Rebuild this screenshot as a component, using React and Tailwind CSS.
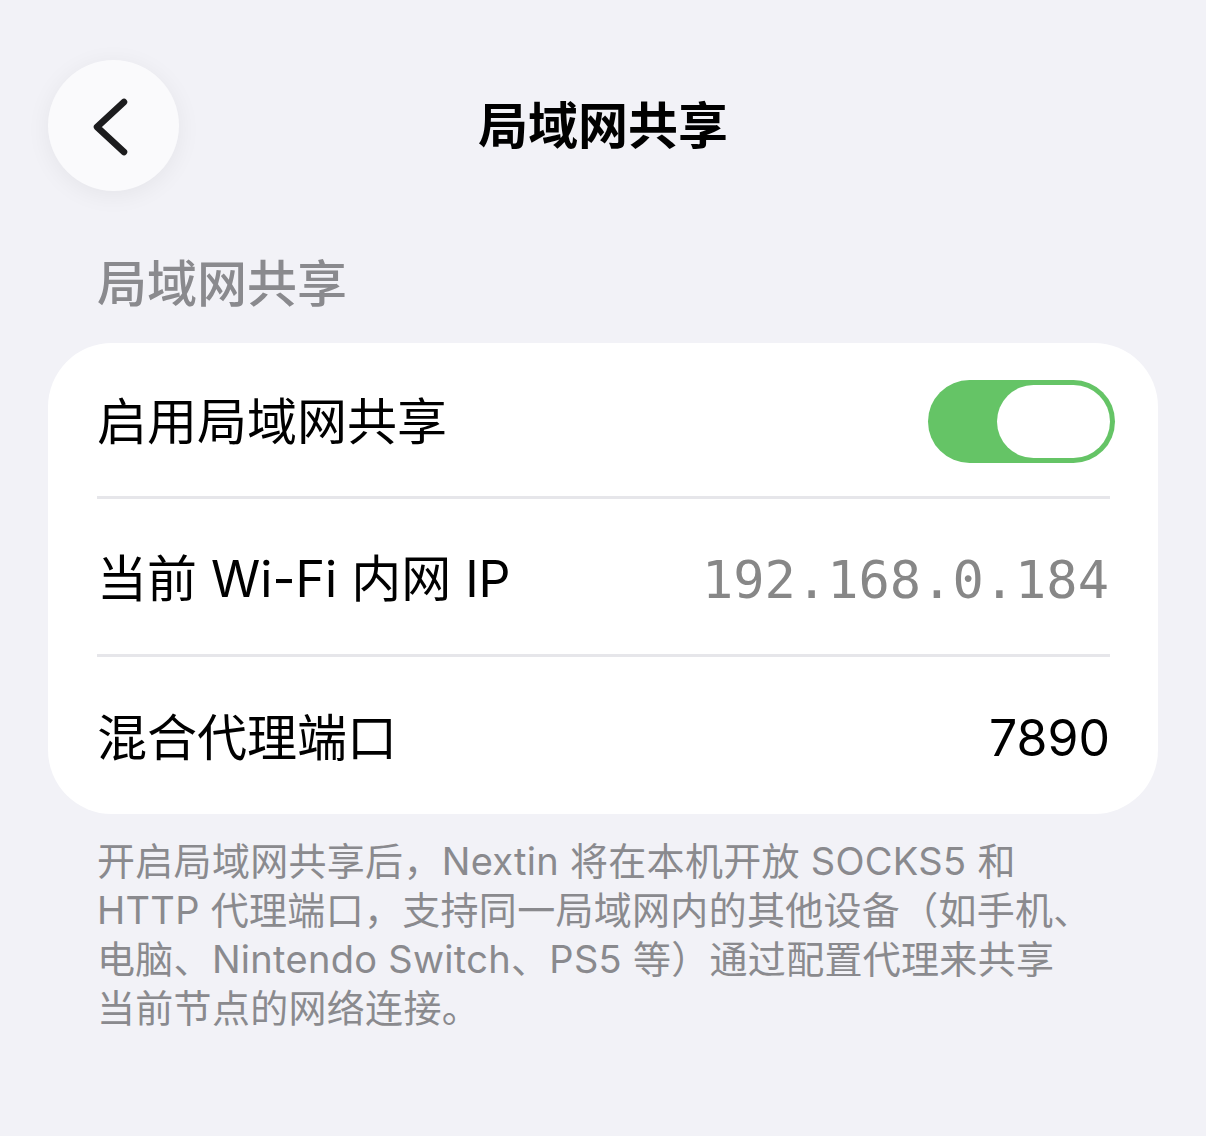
import React from "react";

const FONT = { fontFamily: 'Inter, "Noto Sans CJK SC", sans-serif' };

function BackButton() {
  return (
    <button className="w-[131px] h-[131px] rounded-full bg-[#fafafc] shadow-[0_4px_24px_rgba(0,0,0,0.06)] flex items-center justify-center">
      <svg width="48" height="64" viewBox="0 0 48 64" fill="none">
        <path d="M34 8 L7 33 L34 58" stroke="#1c1c1e" strokeWidth="6.5" strokeLinecap="round" strokeLinejoin="round" />
      </svg>
    </button>
  );
}

function Toggle() {
  return (
    <div className="w-[187px] h-[83px] -mr-[5px] mt-[4px] rounded-full bg-[#65c466] p-[5px] flex justify-end">
      <div className="w-[113px] h-[73px] rounded-full bg-white" />
    </div>
  );
}

function Row({ children, last, h }) {
  return (
    <div className={`flex items-center justify-between ${h} ${last ? "" : "border-b-[3px] border-[#e6e6ea]"}`}>
      {children}
    </div>
  );
}

export default function App() {
  return (
    <div className="min-h-[1136px] bg-[#f2f2f7] px-[48px] pt-[60px]" style={FONT}>
      {/* Nav bar */}
      <div className="grid grid-cols-[131px_1fr_131px] items-center">
        <BackButton />
        <h1 className="text-center text-[50px] font-semibold text-black leading-none">局域网共享</h1>
        <div />
      </div>

      {/* Section header */}
      <p className="mt-[63px] pl-[49px] text-[50px] leading-[60px] font-medium text-[#8a8a8e]">局域网共享</p>

      {/* Card */}
      <div className="mt-[29px] bg-white rounded-[64px] pl-[49px] pr-[48px]">
        <Row h="h-[156px]">
          <span className="text-[50px] text-black mt-[6px]">启用局域网共享</span>
          <Toggle />
        </Row>
        <Row h="h-[158px]">
          <span className="text-[50px] text-black mt-[6px]">当前 Wi-Fi 内网 IP</span>
          <span className="text-[52px] text-[#878787] pr-[1px] mt-[6px]" style={{ fontFamily: '"DejaVu Sans Mono", monospace' }}>
            192.168.0.184
          </span>
        </Row>
        <Row last h="h-[157px]">
          <span className="text-[50px] text-black mt-[6px]">混合代理端口</span>
          <span className="text-[50px] text-black mt-[6px]">7890</span>
        </Row>
      </div>

      {/* Footer */}
      <p className="mt-[23px] pl-[49px] text-[38px] tracking-[0.3px] leading-[49px] text-[#8a8a8e]">
        开启局域网共享后，Nextin 将在本机开放 SOCKS5 和<br />
        HTTP 代理端口，支持同一局域网内的其他设备（如手机、<br />
        电脑、Nintendo Switch、PS5 等）通过配置代理来共享<br />
        当前节点的网络连接。
      </p>
    </div>
  );
}
